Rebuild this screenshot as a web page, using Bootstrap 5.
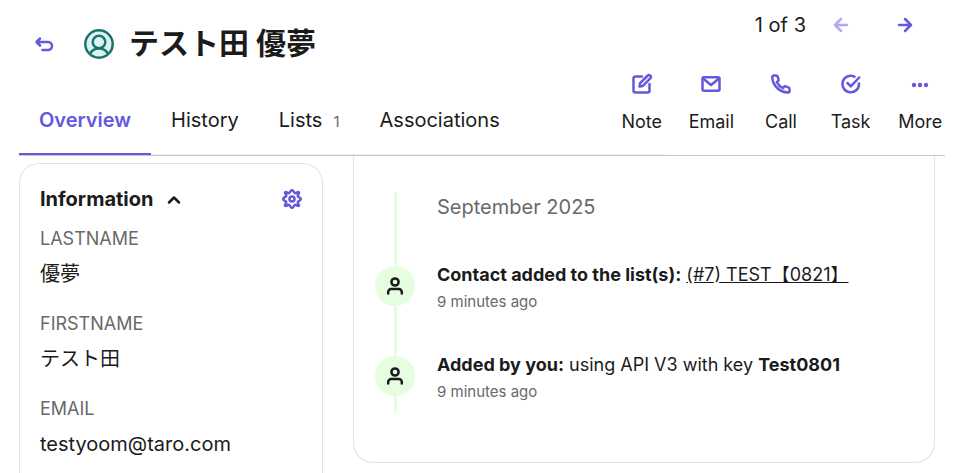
<!DOCTYPE html>
<html lang="en">
<head>
<meta charset="utf-8">
<meta name="viewport" content="width=device-width, initial-scale=1">
<title>Contact</title>
<link href="https://cdn.jsdelivr.net/npm/bootstrap@5.3.0/dist/css/bootstrap.min.css" rel="stylesheet">
<style>
  :root { --brand: #6358de; --ink: #1b1b1b; --soft: #696969; --mint: #e7fddf; --edge: #e3e3e3; }
  body { font-family: Inter, "Noto Sans CJK JP", sans-serif; font-size: 20px; line-height: 30px; color: var(--ink); background: #fff; }
  .page { padding: 0 9px 0 19px; }
  .topbar { height: 156px; border-bottom: 1px solid #c0c6d4; }
  .plain { background: none; border: 0; padding: 0; color: var(--brand); line-height: 0; }
  .plain:disabled { opacity: .5; }
  .ico { fill: none; stroke: currentColor; stroke-width: 2.5; stroke-linecap: round; stroke-linejoin: round; display: block; }
  .heading-row { height: 88px; padding-left: 14px; }
  .contact-name { font-size: 30px; line-height: 40px; font-weight: 700; padding-bottom: 2px; }
  .avatar { margin: 0 15px 0 29px; }
  .tabs { border-bottom: 1px solid #eceff2; margin-right: -49px; }
  .tabs a { color: var(--ink); text-decoration: none; padding: 0 20px 16px; border-bottom: 2px solid transparent; margin-bottom: -1px; }
  .tabs a.active { color: var(--brand); font-weight: 600; border-color: var(--brand); }
  .tally { font-size: 15px; color: var(--soft); margin-left: 11px; }
  .side { width: 328px; }
  .pager { padding: 10px 30px 0 0; }
  .pager span { margin-right: 25px; }
  .pager .next { margin-left: 44px; }
  .actions { display: grid; grid-template-columns: repeat(5, 1fr); gap: 20px; margin-top: 32px; }
  .actions button { display: flex; flex-direction: column; align-items: center; gap: 14px; }
  .actions span { font-size: 18px; line-height: 24px; color: var(--ink); }
  .info { width: 304px; margin-top: 7px; padding: 20px 20px 0; border: 1px solid var(--edge); border-bottom: 0; border-radius: 20px 20px 0 0; }
  .info h2 { font-size: 20px; line-height: 30px; font-weight: 700; margin: 0; }
  .info dl { margin: 10px 0 0; }
  .info dt { font-size: 18px; font-weight: 400; color: var(--soft); }
  .info dd { line-height: 40px; margin-bottom: 15px; }
  .feed { margin: 0 10px 10px 30px; padding: 36px 20px 50px 21px; border: 1px solid var(--edge); border-top: 0; border-radius: 0 0 20px 20px; }
  .timeline { padding-bottom: 8px; background: linear-gradient(var(--mint), var(--mint)) 19px 0 / 3px 100% no-repeat; }
  .timeline h3 { font-size: 20px; line-height: 30px; font-weight: 400; color: var(--soft); margin: 0 0 41px 62px; }
  .event { gap: 22px; font-size: 18px; line-height: 24px; }
  .event + .event { margin-top: 39px; }
  .event a { color: var(--ink); }
  .event small { display: block; font-size: 15px; line-height: 24px; margin-top: 3px; color: var(--soft); }
  .dot { width: 40px; height: 40px; margin-top: 3px; background: var(--mint); }
</style>
</head>
<body>
<div class="page vh-100 overflow-hidden d-flex flex-column">
  <header class="topbar d-flex flex-shrink-0">
    <div class="flex-grow-1 d-flex flex-column justify-content-between">
      <div class="heading-row d-flex align-items-center">
        <button class="plain" type="button" aria-label="Back">
          <svg class="ico" width="22" height="22" viewBox="0 0 22 22"><path d="M7 5.500 3.500 9 7 12.500M4 9H15a4 4 0 0 1 0 8H9.500"/></svg>
        </button>
        <svg class="avatar" width="30" height="30" viewBox="0 0 30 30" fill="#d9f4f3" stroke="#1d716e" stroke-width="2.500"><circle cx="15" cy="15" r="13.700"/><path d="M6 25.200c1.500-4 4.500-5.700 9-5.700s7.500 1.700 9 5.700"/><circle cx="15" cy="13" r="6.300"/></svg>
        <h1 class="contact-name mb-0" lang="ja">テスト田 優夢</h1>
      </div>
      <nav class="tabs d-flex" aria-label="Contact sections">
        <a class="active" href="#overview" aria-current="page">Overview</a>
        <a href="#history">History</a>
        <a href="#lists">Lists<span class="tally">1</span></a>
        <a href="#associations">Associations</a>
      </nav>
    </div>
    <div class="side flex-shrink-0">
      <div class="pager d-flex align-items-center justify-content-end">
        <span>1 of 3</span>
        <button class="plain" type="button" aria-label="Previous contact" disabled><svg class="ico" width="20" height="20" viewBox="0 0 20 20"><path d="M16 10H4.500M10 4l-6 6 6 6"/></svg></button>
        <button class="plain next" type="button" aria-label="Next contact"><svg class="ico" width="20" height="20" viewBox="0 0 20 20"><path d="M4 10H15.500M10 4l6 6-6 6"/></svg></button>
      </div>
      <div class="actions">
        <button class="plain" type="button"><svg class="ico" width="24" height="24" viewBox="0 0 24 24"><path d="M12 4.500H5.500a2 2 0 0 0-2 2v12a2 2 0 0 0 2 2h12a2 2 0 0 0 2-2V12M9.500 14.500l.6-3.300 7.700-7.700a1.600 1.600 0 0 1 2.300 0l.4.4a1.600 1.600 0 0 1 0 2.300l-7.700 7.700z"/></svg><span>Note</span></button>
        <button class="plain" type="button"><svg class="ico" width="24" height="24" viewBox="0 0 24 24"><rect x="3.500" y="5.300" width="17" height="13.500" rx="1.500"/><path d="m4 6.500 8 6.500 8-6.500"/></svg><span>Email</span></button>
        <button class="plain" type="button"><svg class="ico" width="24" height="24" viewBox="0 0 24 24"><path d="M4.500 3.500h2.700a1.500 1.500 0 0 1 1.400 1l1 2.900a1.500 1.500 0 0 1-.5 1.600l-1.300 1.100a15 15 0 0 0 6.100 6.100l1.100-1.300a1.500 1.500 0 0 1 1.600-.5l2.900 1a1.500 1.500 0 0 1 1 1.400v2.200a1.500 1.500 0 0 1-1.500 1.500C10.500 20.500 3.300 13 3.300 5a1.500 1.500 0 0 1 1.200-1.500z"/></svg><span>Call</span></button>
        <button class="plain" type="button"><svg class="ico" width="24" height="24" viewBox="0 0 24 24"><path d="M20 11.500A8.300 8.300 0 1 1 15.500 4.600M8.500 11l3.300 3.300 8.400-8.800"/></svg><span>Task</span></button>
        <button class="plain" type="button"><svg width="24" height="24" viewBox="0 0 24 24" fill="currentColor"><circle cx="6" cy="13" r="2.200"/><circle cx="12" cy="13" r="2.200"/><circle cx="18" cy="13" r="2.200"/></svg><span>More</span></button>
      </div>
    </div>
  </header>

  <main class="d-flex flex-grow-1">
    <section class="info flex-shrink-0">
      <div class="d-flex align-items-center justify-content-between">
        <div class="d-flex align-items-center gap-2">
          <h2>Information</h2>
          <button class="plain text-reset" type="button" aria-label="Collapse information" aria-expanded="true"><svg class="ico" width="24" height="24" viewBox="0 0 24 24"><path d="m8 15.500 5-5 5 5"/></svg></button>
        </div>
        <button class="plain" type="button" aria-label="Settings"><svg class="ico" width="20" height="20" viewBox="0 0 20 20"><path d="M10 1.200C11.800 1.200 11.600 3.600 13 4.200S15.700 2.300 16.800 3.200 15.200 5.900 15.800 7.200 18.800 8.200 18.800 10 16.400 11.600 15.800 12.900 17.700 15.700 16.800 16.800 14.300 15.200 13 15.800 11.800 18.800 10 18.800 8.400 16.400 7 15.800 4.300 17.700 3.200 16.800 4.800 14.300 4.200 13 1.200 11.800 1.200 10 3.600 8.400 4.200 7 2.300 4.300 3.200 3.200 5.700 4.800 7 4.200 8.200 1.200 10 1.200z"/><circle cx="10" cy="10" r="2.500"/></svg></button>
      </div>
      <dl>
        <dt>LASTNAME</dt><dd lang="ja">優夢</dd>
        <dt>FIRSTNAME</dt><dd lang="ja">テスト田</dd>
        <dt>EMAIL</dt><dd>testyoom@taro.com</dd>
      </dl>
    </section>

    <section class="feed flex-grow-1 align-self-start">
      <div class="timeline">
        <h3>September 2025</h3>
        <article class="event d-flex">
          <div class="dot rounded-circle d-flex align-items-center justify-content-center flex-shrink-0"><svg class="ico" width="20" height="20" viewBox="0 0 20 20"><circle cx="10" cy="6" r="3.600"/><path d="M3.200 17.500v-1.500a3 3 0 0 1 3-3h7.600a3 3 0 0 1 3 3v1.500"/></svg></div>
          <div><strong>Contact added to the list(s):</strong> <a href="#list-7" lang="ja">(#7) TEST【0821】</a><small>9 minutes ago</small></div>
        </article>
        <article class="event d-flex">
          <div class="dot rounded-circle d-flex align-items-center justify-content-center flex-shrink-0"><svg class="ico" width="20" height="20" viewBox="0 0 20 20"><circle cx="10" cy="6" r="3.600"/><path d="M3.200 17.500v-1.500a3 3 0 0 1 3-3h7.600a3 3 0 0 1 3 3v1.500"/></svg></div>
          <div><strong>Added by you:</strong> using API V3 with key <strong>Test0801</strong><small>9 minutes ago</small></div>
        </article>
      </div>
    </section>
  </main>
</div>
<script src="https://cdn.jsdelivr.net/npm/bootstrap@5.3.0/dist/js/bootstrap.bundle.min.js"></script>
</body>
</html>
